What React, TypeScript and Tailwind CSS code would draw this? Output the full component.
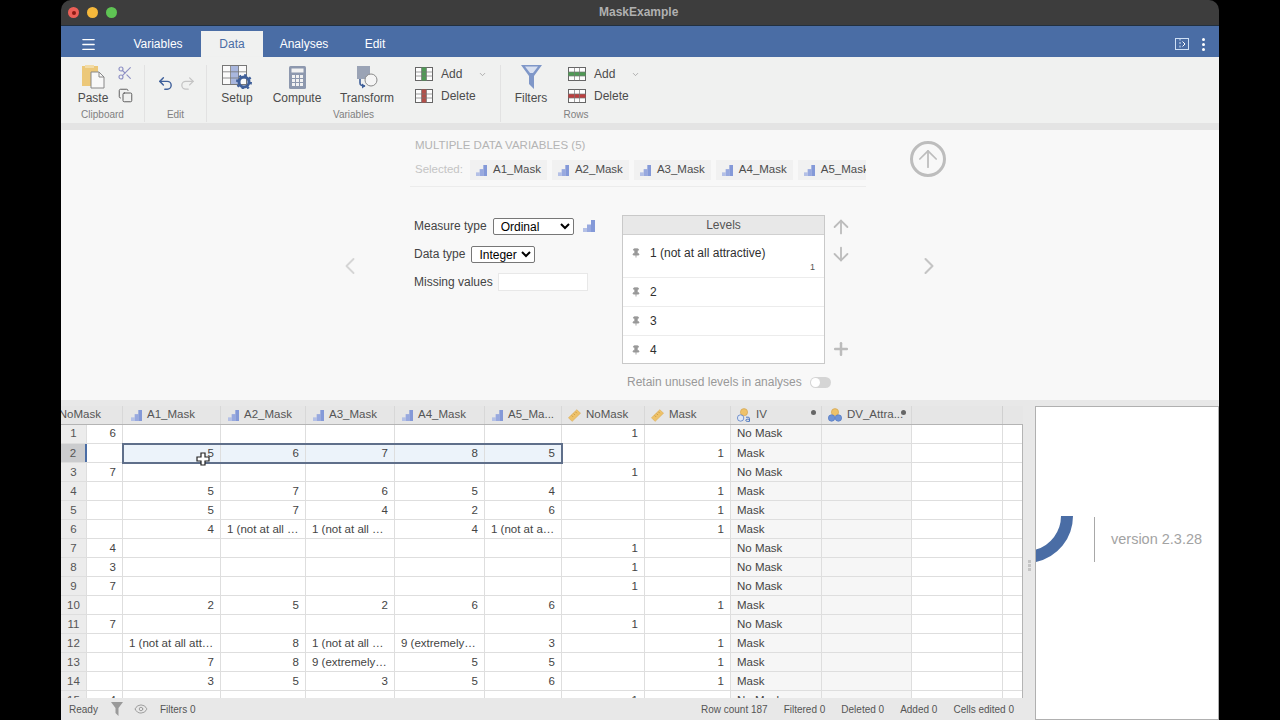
import { ArrowDown, ArrowUp, ChevronDown, ChevronLeft, ChevronRight, Copy, Eye, Menu, Pin, Plus, Redo2, Scissors, Undo2 } from "lucide-react";

type Row = [string, string, string, string, string, string, string, string, string, string];

const rows: Row[] = [
  ["6", "", "", "", "", "", "1", "", "No Mask", ""],
  ["", "5", "6", "7", "8", "5", "", "1", "Mask", ""],
  ["7", "", "", "", "", "", "1", "", "No Mask", ""],
  ["", "5", "7", "6", "5", "4", "", "1", "Mask", ""],
  ["", "5", "7", "4", "2", "6", "", "1", "Mask", ""],
  ["", "4", "1 (not at all …", "1 (not at all …", "4", "1 (not at a…", "", "1", "Mask", ""],
  ["4", "", "", "", "", "", "1", "", "No Mask", ""],
  ["3", "", "", "", "", "", "1", "", "No Mask", ""],
  ["7", "", "", "", "", "", "1", "", "No Mask", ""],
  ["", "2", "5", "2", "6", "6", "", "1", "Mask", ""],
  ["7", "", "", "", "", "", "1", "", "No Mask", ""],
  ["", "1 (not at all att…", "8", "1 (not at all …", "9 (extremely…", "3", "", "1", "Mask", ""],
  ["", "7", "8", "9 (extremely…", "5", "5", "", "1", "Mask", ""],
  ["", "3", "5", "3", "5", "6", "", "1", "Mask", ""],
  ["4", "", "", "", "", "", "1", "", "No Mask", ""],
];

const colWidths = ["w-[36px]", "w-[98px]", "w-[85px]", "w-[89px]", "w-[90px]", "w-[77px]", "w-[83px]", "w-[86px]", "w-[91px]", "w-[90px]"];

function OrdinalIcon({ className = "" }: { className?: string }) {
  return (
    <svg viewBox="0 0 12 12" className={className}>
      <rect x="0" y="8" width="4" height="4" fill="#b4c0e6" />
      <rect x="4" y="4.5" width="4" height="7.5" fill="#98a9df" />
      <rect x="8" y="0" width="4" height="12" fill="#8499d8" />
    </svg>
  );
}

function RulerIcon() {
  return (
    <svg viewBox="0 0 14 14" className="h-[13px] w-[13px] shrink-0">
      <path d="M0.5 9.5 9.5 0.8 13.5 4.5 4.5 13.3Z" fill="#eec26a" stroke="#dba94a" strokeWidth="0.6" />
      <path d="M4 7 5.5 8.5M6 5 7.5 6.5M8 3 9.5 4.5" stroke="#b98a35" strokeWidth="0.7" />
    </svg>
  );
}

function NominalIcon({ text = false }: { text?: boolean }) {
  return (
    <svg viewBox="0 0 14 14" className="h-[14px] w-[14px] shrink-0">
      <circle cx="7" cy="4.2" r="3.6" fill="#eec26a" stroke="#cf9f4b" strokeWidth="0.6" />
      <circle cx="3.6" cy="10" r="3.2" fill={text ? "#dfe8f5" : "#6e93d6"} stroke="#5a7fc4" strokeWidth="0.8" />
      {!text && <circle cx="10.4" cy="10" r="3.2" fill="#6e93d6" stroke="#5a7fc4" strokeWidth="0.8" />}
      {text && <path d="M9 9.2h2.2c.8 0 1.3.4 1.3 1.2v3h-2.3c-.8 0-1.4-.4-1.4-1.1s.6-1.1 1.4-1.1h2.3" fill="none" stroke="#4d78c0" strokeWidth="1" />}
    </svg>
  );
}

function GridIcon({ kind, color }: { kind: "col" | "row"; color: string }) {
  return (
    <svg viewBox="0 0 18 14" className="h-[14px] w-[18px] shrink-0">
      <rect x="0.5" y="0.5" width="17" height="13" fill="#fdfdfd" stroke="#666" />
      {kind === "col" ? <rect x="6.5" y="0.5" width="5" height="13" fill={color} /> : <rect x="0.5" y="5" width="17" height="4" fill={color} />}
      <path d="M6.5 .5v13M11.5 .5v13M.5 5h17M.5 9h17" stroke="#777" strokeWidth="0.7" />
    </svg>
  );
}

function BigButton({ icon, label, className }: { icon: React.ReactNode; label: string; className: string }) {
  return (
    <div className={`flex flex-col items-center ${className}`}>
      <div className="flex h-[24px] items-center justify-center">{icon}</div>
      <span className="mt-[1px] text-[12px] leading-[16px] text-[#4c4c4c]">{label}</span>
    </div>
  );
}

function AddDelete({ kind, add, del, className }: { kind: "col" | "row"; add: string; del: string; className: string }) {
  return (
    <div className={`flex flex-col gap-[8px] pt-[2px] ${className}`}>
      <div className="flex h-[14px] items-center">
        <GridIcon kind={kind} color={add} />
        <span className="ml-[8px] w-[37px] text-[12px] leading-[14px] text-[#4c4c4c]">Add</span>
        <ChevronDown className="h-[9px] w-[9px] text-[#999]" strokeWidth={2} />
      </div>
      <div className="flex h-[14px] items-center">
        <GridIcon kind={kind} color={del} />
        <span className="ml-[8px] text-[12px] leading-[14px] text-[#4c4c4c]">Delete</span>
      </div>
    </div>
  );
}

function RibbonGroup({ label, className, children, divider = true }: { label: string; className: string; children: React.ReactNode; divider?: boolean }) {
  return (
    <div className={`flex h-[57px] flex-col ${divider ? "border-r border-[#e2e2e2]" : ""} ${className}`}>
      <div className="flex h-[43px] items-start">{children}</div>
      <div className="text-center text-[10px] leading-[13px] text-[#808080]">{label}</div>
    </div>
  );
}

function Ribbon() {
  return (
    <div className="flex h-[66px] bg-[#f0f1f0] pt-[8px] shadow-[0_2px_3px_rgba(0,0,0,0.12)]">
      <RibbonGroup label="Clipboard" className="w-[84px]">
        <BigButton
          className="ml-[16px] w-[32px]"
          label="Paste"
          icon={
            <svg viewBox="0 0 23 24" className="h-[24px] w-[23px]">
              <path d="M0 1h16v20H0z" fill="#ecc879" />
              <path d="M3 0h9v3H3z" fill="#f2dca8" />
              <path d="M9 7h8l5 5v11H9z" fill="#f8f8f8" stroke="#888" />
              <path d="M17 7v5h5" fill="none" stroke="#888" />
            </svg>
          }
        />
        <div className="ml-[8px] flex flex-col items-center gap-[7px]">
          <Scissors className="h-[16px] w-[16px] text-[#8d8fc4]" strokeWidth={1.7} />
          <Copy className="h-[15px] w-[15px] text-[#555]" strokeWidth={1.5} />
        </div>
      </RibbonGroup>
      <RibbonGroup label="Edit" className="w-[62px]">
        <div className="ml-[12px] mt-[10px] flex gap-[5px]">
          <Undo2 className="h-[17px] w-[17px] text-[#3f609b]" strokeWidth={2} />
          <Redo2 className="h-[17px] w-[17px] text-[#c4c4c4]" strokeWidth={1.8} />
        </div>
      </RibbonGroup>
      <RibbonGroup label="Variables" className="w-[294px]">
        <BigButton
          className="ml-[14px] w-[32px]"
          label="Setup"
          icon={
            <svg viewBox="0 0 30 24" className="h-[24px] w-[30px]">
              <rect x="0.5" y="0.5" width="24" height="19" fill="#fafafa" stroke="#777" />
              <rect x="9" y="1" width="8" height="18" fill="#a9b7de" />
              <path d="M8.5 .5v19M16.5 .5v19M.5 6.8h24M.5 13h24" stroke="#777" strokeWidth="0.8" />
              <circle cx="22" cy="17" r="5" fill="none" stroke="#3f5f99" strokeWidth="3" />
              <circle cx="22" cy="17" r="7" fill="none" stroke="#3f5f99" strokeWidth="2" strokeDasharray="2.4 3.1" />
            </svg>
          }
        />
        <BigButton
          className="ml-[18px] w-[52px]"
          label="Compute"
          icon={
            <svg viewBox="0 0 17 23" className="h-[23px] w-[17px]">
              <rect width="17" height="23" rx="1.5" fill="#8d98ae" />
              <rect x="2.5" y="2.5" width="12" height="4" fill="#f2f2f2" />
              <path d="M3 9h3v3H3zM7 9h3v3H7zM11 9h3v3h-3zM3 13h3v3H3zM7 13h3v3H7zM11 13h3v3h-3zM3 17h3v3H3zM7 17h3v3H7zM11 17h3v3h-3z" fill="#f2f2f2" />
            </svg>
          }
        />
        <BigButton
          className="ml-[16px] w-[56px]"
          label="Transform"
          icon={
            <svg viewBox="0 0 22 24" className="h-[24px] w-[22px]">
              <path d="M1 1h13v9l-4 4H1z" fill="#9aa3b5" />
              <circle cx="15" cy="15" r="6" fill="#f5f5f5" stroke="#8a8a8a" />
              <path d="M4 14v4c0 2 2 3 5 3" fill="none" stroke="#3f5f99" strokeWidth="1.6" />
              <path d="M6 18.5 9.5 21 6 23.5Z" fill="#3f5f99" />
            </svg>
          }
        />
        <AddDelete kind="col" add="#4f9a55" del="#b2504a" className="ml-[20px]" />
      </RibbonGroup>
      <RibbonGroup label="Rows" className="w-[150px]" divider={false}>
        <BigButton
          className="ml-[13px] w-[34px]"
          label="Filters"
          icon={
            <svg viewBox="0 0 21 24" className="h-[24px] w-[21px]">
              <path d="M0 0h21L13 11v13l-5-5V11Z" fill="#7f97c8" />
              <path d="M4 1.5h13L12 8H9Z" fill="#d8e0f0" />
            </svg>
          }
        />
        <AddDelete kind="row" add="#4f9a55" del="#bd3f3f" className="ml-[20px]" />
      </RibbonGroup>
    </div>
  );
}

function Chip({ name }: { name: string }) {
  return (
    <div className="flex h-[20px] shrink-0 items-center gap-[6px] bg-[#f1f1f1] pl-[6px] pr-[6px] text-[11.5px] text-[#4d4d4d]">
      <OrdinalIcon className="h-[11px] w-[11px] shrink-0" />
      {name}
    </div>
  );
}

function LevelRow({ text, height, offset, sub }: { text: string; height: string; offset: string; sub?: string }) {
  return (
    <div className={`relative border-b border-[#ececec] bg-white pl-[8px] last:border-b-0 ${height} ${offset}`}>
      <div className="flex h-[16px] items-center gap-[9px]">
        <Pin className="h-[10px] w-[10px] fill-[#999] text-[#999]" />
        <span className="text-[12px] leading-[16px] text-[#2f2f2f]">{text}</span>
      </div>
      {sub && <span className="absolute bottom-[3px] right-[9px] text-[9px] text-[#555]">{sub}</span>}
    </div>
  );
}

function Editor() {
  return (
    <div className="flex h-[270px] flex-col bg-[#f8f8f8] pt-[8px]">
      <div className="flex">
        <div className="ml-[349px] w-[456px] border-b border-[#ececec] pb-[6px] pl-[5px]">
          <div className="text-[11.5px] leading-[14px] text-[#b4b4b4]">MULTIPLE DATA VARIABLES (5)</div>
          <div className="mt-[8px] flex items-center gap-[5px] overflow-hidden">
            <span className="w-[50px] shrink-0 text-[11.5px] text-[#c4c4c4]">Selected:</span>
            <Chip name="A1_Mask" />
            <Chip name="A2_Mask" />
            <Chip name="A3_Mask" />
            <Chip name="A4_Mask" />
            <Chip name="A5_Mask" />
          </div>
        </div>
        <div className="ml-[44px] mt-[3px] flex h-[36px] w-[36px] items-center justify-center rounded-full border-[3px] border-[#bdbdbd]">
          <ArrowUp className="h-[28px] w-[28px] text-[#bdbdbd]" strokeWidth={1.5} />
        </div>
      </div>
      <div className="mt-[28px] flex">
        <ChevronLeft className="ml-[275px] mt-[37px] h-[28px] w-[28px] text-[#d5d5d5]" strokeWidth={1.6} />
        <div className="ml-[50px] w-[208px] pt-[2px] text-[12px] text-[#444]">
          <div className="flex h-[18px] items-center gap-[6px]">
            Measure type
            <select defaultValue="Ordinal" className="h-[17px] w-[81px] rounded-[2px] border border-[#777] bg-white pl-[3px] text-[12px] text-black">
              <option>Ordinal</option>
            </select>
            <OrdinalIcon className="ml-[3px] h-[12px] w-[12px]" />
          </div>
          <div className="mt-[10px] flex h-[18px] items-center gap-[6px]">
            Data type
            <select defaultValue="Integer" className="h-[17px] w-[64px] rounded-[2px] border border-[#777] bg-white pl-[3px] text-[12px] text-black">
              <option>Integer</option>
            </select>
          </div>
          <div className="mt-[10px] flex h-[18px] items-center gap-[5px]">
            Missing values
            <div className="h-[18px] w-[90px] border border-[#e8e8e8] bg-white" />
          </div>
        </div>
        <div className="w-[203px]">
          <div className="border border-[#c9c9c9]">
            <div className="flex h-[19px] items-center justify-center border-b border-[#d0d0d0] bg-[#e8e8e8] text-[12px] text-[#555]">Levels</div>
            <LevelRow text="1 (not at all attractive)" height="h-[43px]" offset="pt-[10px]" sub="1" />
            <LevelRow text="2" height="h-[29px]" offset="pt-[6px]" />
            <LevelRow text="3" height="h-[29px]" offset="pt-[6px]" />
            <LevelRow text="4" height="h-[27px]" offset="pt-[6px]" />
          </div>
          <div className="mt-[9px] flex items-center whitespace-nowrap pl-[5px] text-[12px] text-[#999]">
            Retain unused levels in analyses
            <div className="ml-[8px] flex h-[11px] w-[21px] shrink-0 items-center rounded-full bg-[#d5d5d5]">
              <div className="ml-[1px] h-[9px] w-[9px] rounded-full bg-white" />
            </div>
          </div>
        </div>
        <div className="ml-[5px] flex h-[148px] w-[22px] flex-col items-center pt-[1px] text-[#bcbcbc]">
          <ArrowUp className="h-[22px] w-[22px]" strokeWidth={2} />
          <ArrowDown className="mt-[5px] h-[22px] w-[22px]" strokeWidth={2} />
          <Plus className="mt-[74px] h-[20px] w-[20px]" strokeWidth={3} />
        </div>
        <ChevronRight className="ml-[63px] mt-[37px] h-[28px] w-[28px] text-[#c4c4c4]" strokeWidth={1.8} />
      </div>
    </div>
  );
}

function HeaderCell({ name, icon, width, pad = "pl-[6px]", dot, dotClass }: { name: string; icon: React.ReactNode; width: string; pad?: string; dot?: boolean; dotClass?: string }) {
  return (
    <div className={`relative flex h-full shrink-0 items-center gap-[5px] border-r border-[#d8d8d8] text-[11.5px] text-[#555] ${pad} ${width}`}>
      {icon}
      <span>{name}</span>
      {dot && <span className={`absolute top-[4px] h-[5px] w-[5px] rounded-full bg-[#666] ${dotClass}`} />}
    </div>
  );
}

function DataRow({ row, index }: { row: Row; index: number }) {
  const selected = index === 1;
  return (
    <div className={`flex h-[19px] shrink-0 border-b border-[#dedede] bg-white text-[11.5px] text-[#444] ${index === 0 ? "leading-[16px]" : "leading-[18px]"}`}>
      <div className={`w-[26px] shrink-0 text-center text-[#555] ${selected ? "border-r-2 border-r-[#4a6da5] bg-[#cbccce]" : "border-r border-[#dedede] bg-[#ececec]"}`}>{index + 1}</div>
      {row.map((cell, c) => {
        const isLabel = cell.length > 2 && c < 6;
        const isVar = c === 8;
        const dimmed = c === 8 || c === 9;
        const sel = selected && c >= 1 && c <= 5;
        return (
          <div
            key={c}
            className={`shrink-0 overflow-hidden whitespace-nowrap border-r border-[#dedede] ${colWidths[c]} ${isVar || isLabel ? "pl-[6px] text-left" : "pr-[6px] text-right"} ${sel ? "bg-[#ecf3fa]" : dimmed ? "bg-[#f6f6f6]" : ""}`}
          >
            {cell}
          </div>
        );
      })}
      <div className="w-[91px] shrink-0 border-r border-[#dedede]" />
      <div className="flex-1" />
    </div>
  );
}

function DataTable() {
  const ordinal = <OrdinalIcon className="h-[11px] w-[11px] shrink-0" />;
  return (
    <div className="relative flex w-[962px] flex-col">
      <div className="flex h-[18px] bg-[#e6e6e6]">
        <div className="flex h-full w-[62px] shrink-0 items-center justify-end overflow-hidden border-r border-[#d8d8d8] pr-[21px] text-[11.5px] text-[#555]">
          <span className="shrink-0">NoMask</span>
        </div>
        <HeaderCell name="A1_Mask" width="w-[98px]" pad="pl-[8px]" icon={ordinal} />
        <HeaderCell name="A2_Mask" width="w-[85px]" pad="pl-[7px]" icon={ordinal} />
        <HeaderCell name="A3_Mask" width="w-[89px]" pad="pl-[7px]" icon={ordinal} />
        <HeaderCell name="A4_Mask" width="w-[90px]" pad="pl-[7px]" icon={ordinal} />
        <HeaderCell name="A5_Ma..." width="w-[77px]" pad="pl-[7px]" icon={ordinal} />
        <HeaderCell name="NoMask" width="w-[83px]" icon={<RulerIcon />} />
        <HeaderCell name="Mask" width="w-[86px]" icon={<RulerIcon />} />
        <HeaderCell name="IV" width="w-[91px]" icon={<NominalIcon text />} dot dotClass="right-[5px]" />
        <HeaderCell name="DV_Attra..." width="w-[90px]" icon={<NominalIcon />} dot dotClass="right-[5px]" />
        <div className="w-[91px] shrink-0 border-r border-[#d0d0d0]" />
      </div>
      <div className="flex h-[274px] flex-col overflow-hidden border-r border-t border-[#b4b4b4]">
        {rows.map((row, i) => (
          <DataRow key={i} row={row} index={i} />
        ))}
      </div>
      <div className="absolute left-[61px] top-[37px] h-[21px] w-[441px] border-2 border-[#5f6f8a]" />
      <svg viewBox="0 0 14 14" className="absolute left-[135px] top-[46px] h-[14px] w-[14px]">
        <path d="M5 1h4v4h4v4H9v4H5V9H1V5h4Z" fill="#fff" stroke="#222" strokeWidth="1.2" />
      </svg>
    </div>
  );
}

function StatusBar() {
  return (
    <div className="flex h-[22px] w-[962px] items-center text-[10px] text-[#555]">
      <span className="ml-[8px]">Ready</span>
      <svg viewBox="0 0 12 14" className="ml-[13px] h-[14px] w-[12px]">
        <path d="M0 0h12L7.5 6v8L4.5 11V6Z" fill="#9a9a9a" />
      </svg>
      <Eye className="ml-[11px] h-[14px] w-[14px] text-[#999]" strokeWidth={1.6} />
      <span className="ml-[12px]">Filters 0</span>
      <div className="ml-auto flex gap-[16px] pr-[9px]">
        <span>Row count 187</span>
        <span>Filtered 0</span>
        <span>Deleted 0</span>
        <span>Added 0</span>
        <span>Cells edited 0</span>
      </div>
    </div>
  );
}

function ResultsPanel() {
  return (
    <div className="flex-1 border border-[#b0b0b0] bg-white pt-[109px]">
      <div className="flex items-center">
        <svg viewBox="0 0 38 47" className="h-[47px] w-[38px] shrink-0">
          <path d="M37 0A47 47 0 0 1 0 46V33.5A35 35 0 0 0 25 0Z" fill="#4a6da5" />
        </svg>
        <div className="ml-[20px] h-[45px] w-[1px] bg-[#a8a8a8]" />
        <span className="ml-[16px] text-[14.5px] text-[#a3a3a3]">version 2.3.28</span>
      </div>
    </div>
  );
}

export default function App() {
  return (
    <div className="flex h-[720px] w-[1280px] justify-center overflow-hidden bg-black font-['Liberation_Sans',Arial,sans-serif]">
      <div className="flex w-[1158px] flex-col">
        <div className="flex h-[26px] items-center rounded-t-[10px] border-b border-[#22303f] bg-[#3d3d3d] pl-[7px]">
          <div className="flex gap-[8px]">
            <div className="flex h-[11px] w-[11px] items-center justify-center rounded-full bg-[#ec5f57]">
              <div className="h-[4px] w-[4px] rounded-full bg-[#8c1a14]" />
            </div>
            <div className="h-[11px] w-[11px] rounded-full bg-[#f6b93b]" />
            <div className="h-[11px] w-[11px] rounded-full bg-[#5fc454]" />
          </div>
          <div className="mb-[1px] ml-[482px] text-[12px] font-bold text-[#b0b0b0]">MaskExample</div>
        </div>
        <div className="flex h-[31px] items-end bg-[#4a6da5] text-[12px] text-white">
          <div className="flex h-full w-[54px] items-center justify-center pt-[5px]">
            <Menu className="h-[17px] w-[17px]" strokeWidth={1.8} />
          </div>
          <div className="flex h-full w-[86px] items-center justify-center pt-[5px]">Variables</div>
          <div className="flex h-[26px] w-[62px] items-center justify-center bg-[#f0f1f0] text-[#4a6da5]">Data</div>
          <div className="flex h-full w-[82px] items-center justify-center pt-[5px]">Analyses</div>
          <div className="flex h-full w-[60px] items-center justify-center pt-[5px]">Edit</div>
          <div className="ml-auto flex h-full items-center gap-[13px] pr-[14px] pt-[5px]">
            <svg viewBox="0 0 14 12" className="h-[12px] w-[14px]">
              <rect x="0.5" y="0.5" width="13" height="11" fill="none" stroke="#cfe0f5" />
              <path d="M5 .5v11" stroke="#cfe0f5" strokeDasharray="2 1.5" />
              <path d="M7.5 3.5 10 6 7.5 8.5" fill="none" stroke="#fff" />
            </svg>
            <div className="flex flex-col gap-[2px]">
              <div className="h-[3px] w-[3px] rounded-full bg-white" />
              <div className="h-[3px] w-[3px] rounded-full bg-white" />
              <div className="h-[3px] w-[3px] rounded-full bg-white" />
            </div>
          </div>
        </div>
        <Ribbon />
        <div className="h-[7px] bg-[#e4e4e4]" />
        <Editor />
        <div className="flex flex-1 bg-[#e8e8e8] pt-[6px]">
          <div className="flex flex-col">
            <DataTable />
            <StatusBar />
          </div>
          <div className="flex w-[12px] flex-col items-center justify-center gap-[1px] pt-[4px]">
            <div className="h-[3px] w-[3px] bg-[#c4c4c4]" />
            <div className="h-[3px] w-[3px] bg-[#c4c4c4]" />
            <div className="h-[3px] w-[3px] bg-[#c4c4c4]" />
          </div>
          <ResultsPanel />
        </div>
      </div>
    </div>
  );
}
